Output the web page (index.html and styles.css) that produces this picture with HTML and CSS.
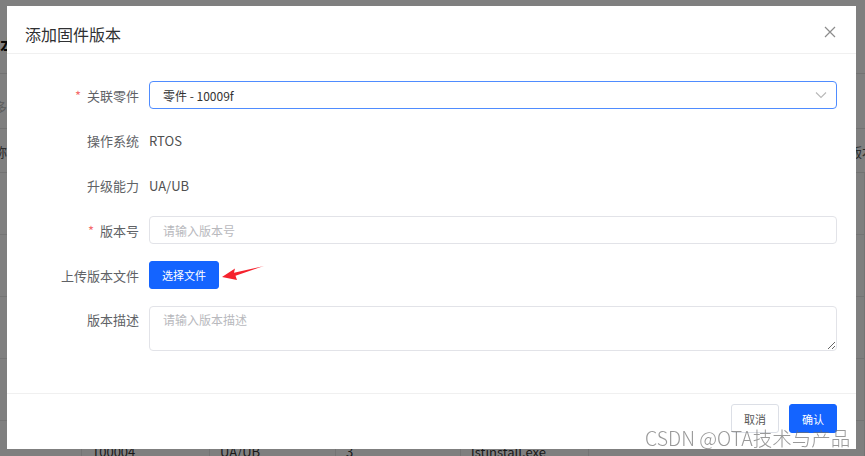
FILE: index.html
```html
<!DOCTYPE html>
<html lang="zh-CN">

<head>
    <meta charset="UTF-8" />
    <meta name="viewport" content="width=device-width, initial-scale=1" />
    <title>添加固件版本</title>
    <link rel="stylesheet" href="styles.css">
</head>

<body>
    <div class="page">
        <div class="page-title">版本</div>
        <div class="page-line"></div>
        <div class="page-search">多选</div>
        <div class="page-line"></div>
        <div class="page-head">
            <span>称</span>
            <span>版本</span>
        </div>
        <div class="page-line"></div>
        <div class="table">
            <div class="row"><span></span><span></span><span></span><span></span><span></span><span></span></div>
            <div class="row"><span></span><span></span><span></span><span></span><span></span><span></span></div>
            <div class="row"><span></span><span></span><span></span><span></span><span></span><span></span></div>
            <div class="row"><span></span><span></span><span></span><span></span><span></span><span></span></div>
            <div class="row"><span></span><span>100004</span><span>UA/UB</span><span>3</span><span>lstinstall.exe</span><span></span></div>
        </div>
    </div>

    <div class="mask"></div>

    <div class="modal">
        <div class="modal-header">
            <span class="modal-title">添加固件版本</span>
            <span class="close">
                <svg width="12" height="12" viewBox="0 0 12 12">
                    <path d="M1 1 L11 11 M11 1 L1 11" stroke="#8c8c8c" stroke-width="1.2" fill="none" />
                </svg>
            </span>
        </div>

        <div class="modal-body">
            <div class="form-row">
                <label class="form-label"><i>*</i>关联零件</label>
                <div class="form-control select">
                    <span>零件 - 10009f</span>
                    <svg width="12" height="8" viewBox="0 0 12 8">
                        <path d="M1 1.5 L6 6.5 L11 1.5" stroke="#b8b8b8" stroke-width="1.1" fill="none" />
                    </svg>
                </div>
            </div>

            <div class="form-row">
                <label class="form-label">操作系统</label>
                <div class="form-text">RTOS</div>
            </div>

            <div class="form-row">
                <label class="form-label">升级能力</label>
                <div class="form-text">UA/UB</div>
            </div>

            <div class="form-row">
                <label class="form-label"><i>*</i>版本号</label>
                <input class="form-control input" type="text" placeholder="请输入版本号" />
            </div>

            <div class="form-row">
                <label class="form-label">上传版本文件</label>
                <button class="btn btn-primary upload-btn">选择文件</button>
                <svg class="arrow" width="44" height="16" viewBox="0 0 44 16">
                    <path d="M1 12 L14 3.5 L13 7.8 L43 1 L14.5 10.8 L16 15 Z" fill="#f5222d" />
                </svg>
            </div>

            <div class="form-row tall">
                <label class="form-label">版本描述</label>
                <textarea class="form-control textarea" placeholder="请输入版本描述"></textarea>
            </div>
        </div>

        <div class="modal-footer">
            <button class="btn btn-default">取消</button>
            <button class="btn btn-primary">确认</button>
        </div>
    </div>

    <div class="watermark">CSDN @OTA技术与产品</div>
</body>

</html>
```

FILE: styles.css
```css
body {
    margin: 0;
    width: 865px;
    height: 456px;
    overflow: hidden;
    font-family: "Noto Sans CJK SC", "Noto Sans", sans-serif;
    background-color: #fff;
    color: #333;
}

/* page behind the dialog */
.page {
    height: 456px;
    overflow: hidden;
}

.page-title {
    font-size: 17px;
    font-weight: bold;
    line-height: 20px;
    color: #111;
    margin-left: -17px;
    padding-top: 35px;
    height: 38px;
}

.page-line {
    height: 1px;
    background-color: #e4e4e4;
}

.page-search {
    height: 31px;
    padding-top: 23px;
    line-height: 20px;
    margin-left: -6px;
    font-size: 13px;
    color: #bbb;
}

.page-head {
    display: flex;
    justify-content: space-between;
    height: 30px;
    padding-top: 13px;
    line-height: 20px;
    font-size: 13px;
    color: #555;
    margin: 0 -10px 0 -6px;
}

.row {
    display: grid;
    grid-template-columns: 82px 128px 126px 125px 128px 1fr;
    height: 62px;
    line-height: 62px;
    border-bottom: 1px solid #e8e8e8;
    box-sizing: border-box;
    font-size: 13px;
    color: #333;
}

.row span {
    border-right: 1px solid #e8e8e8;
    padding-left: 10px;
}

.mask {
    position: fixed;
    inset: 0;
    background-color: rgba(0, 0, 0, 0.5);
}

/* dialog */
.modal {
    position: absolute;
    left: 7px;
    top: 6px;
    width: 849px;
    height: 443px;
    background-color: #fff;
    display: flex;
    flex-direction: column;
}

.modal-header {
    display: flex;
    align-items: center;
    justify-content: space-between;
    height: 47px;
    padding: 0 20px 0 18px;
    border-bottom: 1px solid #f0f0f0;
}

.modal-title {
    font-size: 16px;
    color: #303133;
    margin-top: 9px;
}

.close {
    display: flex;
    margin-top: 4px;
}

.modal-body {
    flex: 1;
    padding: 27px 19px 0 0;
}

.form-row {
    display: flex;
    align-items: center;
    height: 28px;
    margin-bottom: 17px;
}

.form-row.tall {
    height: 44px;
    align-items: flex-start;
}

.form-label {
    width: 142px;
    flex-shrink: 0;
    padding-right: 10px;
    box-sizing: border-box;
    text-align: right;
    font-size: 13px;
    color: #606266;
}

.tall .form-label {
    line-height: 28px;
}

.form-label i {
    font-style: normal;
    color: #f56c6c;
    margin-right: 6px;
}

.form-text {
    font-size: 13px;
    color: #505050;
}

.form-control {
    flex: 1;
    box-sizing: border-box;
    border: 1px solid #e2e3e8;
    border-radius: 4px;
    font-family: inherit;
    font-size: 12px;
    color: #333;
    background: #fff;
    outline: none;
}

.select {
    height: 28px;
    display: flex;
    align-items: center;
    justify-content: space-between;
    padding: 0 9px 0 13px;
    border-color: #4f8cff;
}

.input {
    height: 28px;
    padding: 0 13px;
}

.textarea {
    height: 45px;
    padding: 4px 13px;
    resize: vertical;
}

.form-control::placeholder {
    color: #b8b9bd;
}

.btn {
    font-family: inherit;
    font-size: 11px;
    border-radius: 3px;
    cursor: pointer;
    padding: 0;
}

.btn-primary {
    background-color: #1464ff;
    border: 1px solid #1464ff;
    color: #fff;
}

.btn-default {
    background-color: #fff;
    border: 1px solid #dcdfe6;
    color: #555;
}

.upload-btn {
    width: 70px;
    height: 28px;
}

.arrow {
    margin-left: 2px;
    margin-top: -4px;
}

.modal-footer {
    display: flex;
    justify-content: flex-end;
    gap: 10px;
    height: 56px;
    padding: 10px 19px 0 0;
    box-sizing: border-box;
    border-top: 1px solid #f0f0f0;
}

.modal-footer .btn {
    width: 48px;
    height: 29px;
}

.watermark {
    position: absolute;
    left: 645px;
    top: 423px;
    font-family: "Noto Sans CJK SC", sans-serif;
    font-weight: 300;
    font-size: 19.5px;
    color: rgba(110, 110, 110, 0.7);
    white-space: nowrap;
}
```
